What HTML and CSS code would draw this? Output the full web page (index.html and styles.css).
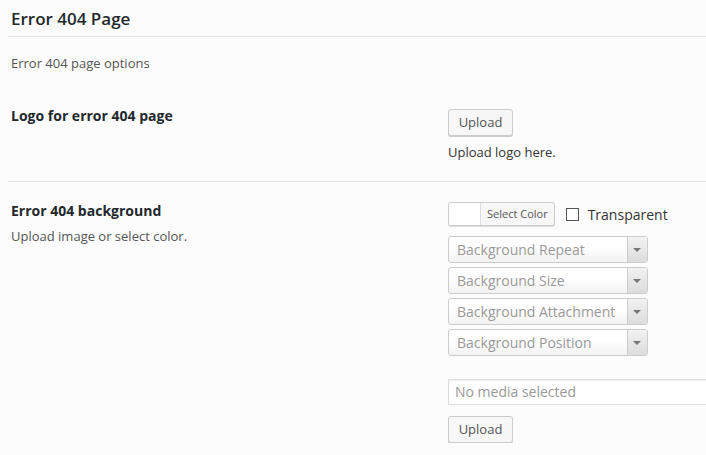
FILE: index.html
```html
<!DOCTYPE html>
<html>
<head>
<meta charset="utf-8">
<link rel="stylesheet" href="styles.css">
</head>
<body>
<div class="page">
  <h2 class="title">Error 404 Page</h2>
  <p class="desc">Error 404 page options</p>

  <div class="row row-logo">
    <div class="label-col">
      <div class="label">Logo for error 404 page</div>
    </div>
    <div class="field-col">
      <button class="btn">Upload</button>
      <div class="hint">Upload logo here.</div>
    </div>
  </div>

  <div class="row row-bg">
    <div class="label-col">
      <div class="label">Error 404 background</div>
      <div class="sub">Upload image or select color.</div>
    </div>
    <div class="field-col">
      <div class="color-line">
        <div class="color-btn"><span class="swatch"></span><span class="color-text">Select Color</span></div>
        <label class="check"><span class="box"></span>Transparent</label>
      </div>
      <div class="selects">
        <div class="select"><span class="sel-text">Background Repeat</span><span class="arrow"></span></div>
        <div class="select"><span class="sel-text">Background Size</span><span class="arrow"></span></div>
        <div class="select"><span class="sel-text">Background Attachment</span><span class="arrow"></span></div>
        <div class="select"><span class="sel-text">Background Position</span><span class="arrow"></span></div>
      </div>
      <div class="media">No media selected</div>
      <button class="btn">Upload</button>
    </div>
  </div>
</div>
</body>
</html>
```

FILE: styles.css
```css
html, body {
  margin: 0;
  padding: 0;
  background: #fcfcfc;
  font-family: "Open Sans", sans-serif;
  color: #333;
  overflow: hidden;
}
.page {
  padding-left: 8px;
  width: 698px;
  overflow: hidden;
}
.title {
  margin: 0;
  padding: 7px 0 0 3px;
  height: 29px;
  font-size: 17px;
  font-weight: 600;
  color: #23282d;
  line-height: 24px;
  border-bottom: 1px solid #e5e5e5;
}
.desc {
  margin: 0;
  padding: 16px 0 0 3px;
  height: 42px;
  font-size: 13px;
  line-height: 20px;
  color: #555;
}
.row {
  display: flex;
}
.row-logo {
  height: 86px;
  border-bottom: 1px solid #e5e5e5;
}
.label-col {
  width: 440px;
  flex-shrink: 0;
  padding-left: 3px;
  box-sizing: border-box;
}
.row-logo .label-col { padding-top: 11px; }
.row-bg .label-col { padding-top: 19px; }
.label {
  font-size: 14px;
  font-weight: 700;
  color: #23282d;
  line-height: 20px;
}
.sub {
  font-size: 13px;
  color: #555;
  line-height: 20px;
  margin-top: 5px;
}
.field-col {
  flex: 1;
  min-width: 0;
  display: flex;
  flex-direction: column;
  align-items: flex-start;
}
.row-logo .field-col { padding-top: 14px; }
.row-bg .field-col { padding-top: 20px; }
.btn {
  font-family: "Open Sans", sans-serif;
  font-size: 13px;
  color: #555;
  background: #f7f7f7;
  border: 1px solid #ccc;
  border-radius: 3px;
  box-shadow: 0 1px 0 #ccc;
  width: 65px;
  height: 27px;
  padding: 0;
  line-height: 25px;
}
.hint {
  font-size: 13px;
  color: #333;
  line-height: 20px;
  margin-top: 6px;
}
.color-line {
  display: flex;
  align-items: center;
  height: 24px;
}
.color-btn {
  display: flex;
  height: 24px;
  border: 1px solid #ccc;
  border-radius: 3px;
  box-sizing: border-box;
  background: #f7f7f7;
  box-shadow: 0 1px 0 #ddd;
  overflow: hidden;
}
.swatch {
  width: 31px;
  background: #fff;
  border-right: 1px solid #ddd;
}
.color-text {
  font-size: 11px;
  color: #555;
  line-height: 22px;
  padding: 0 6px 0 6px;
}
.check {
  display: flex;
  align-items: center;
  margin-left: 11px;
  font-size: 14px;
  color: #333;
}
.box {
  width: 11px;
  height: 11px;
  border: 1px solid #555;
  background: #fff;
  margin-right: 9px;
}
.selects {
  margin-top: 10px;
  display: flex;
  flex-direction: column;
  gap: 4px;
}
.select {
  width: 200px;
  height: 27px;
  box-sizing: border-box;
  border: 1px solid #ccc;
  border-radius: 3px;
  background: linear-gradient(#fff, #fff 40%, #f2f2f2);
  display: flex;
  overflow: hidden;
}
.sel-text {
  flex: 1;
  font-size: 14px;
  color: #999;
  line-height: 25px;
  padding-left: 8px;
}
.arrow {
  width: 19px;
  border-left: 1px solid #ccc;
  background: linear-gradient(#f2f2f2, #dcdcdc);
  position: relative;
}
.arrow::after {
  content: "";
  position: absolute;
  left: 5px;
  top: 11px;
  border-left: 4px solid transparent;
  border-right: 4px solid transparent;
  border-top: 4px solid #777;
}
.media {
  margin-top: 23px;
  width: 270px;
  height: 26px;
  flex-shrink: 0;
  box-sizing: border-box;
  border: 1px solid #ddd;
  background: #fff;
  box-shadow: inset 0 1px 2px rgba(0,0,0,0.07);
  font-size: 14px;
  color: #999;
  line-height: 24px;
  padding-left: 6px;
}
.row-bg .btn {
  margin-top: 11px;
}
```
